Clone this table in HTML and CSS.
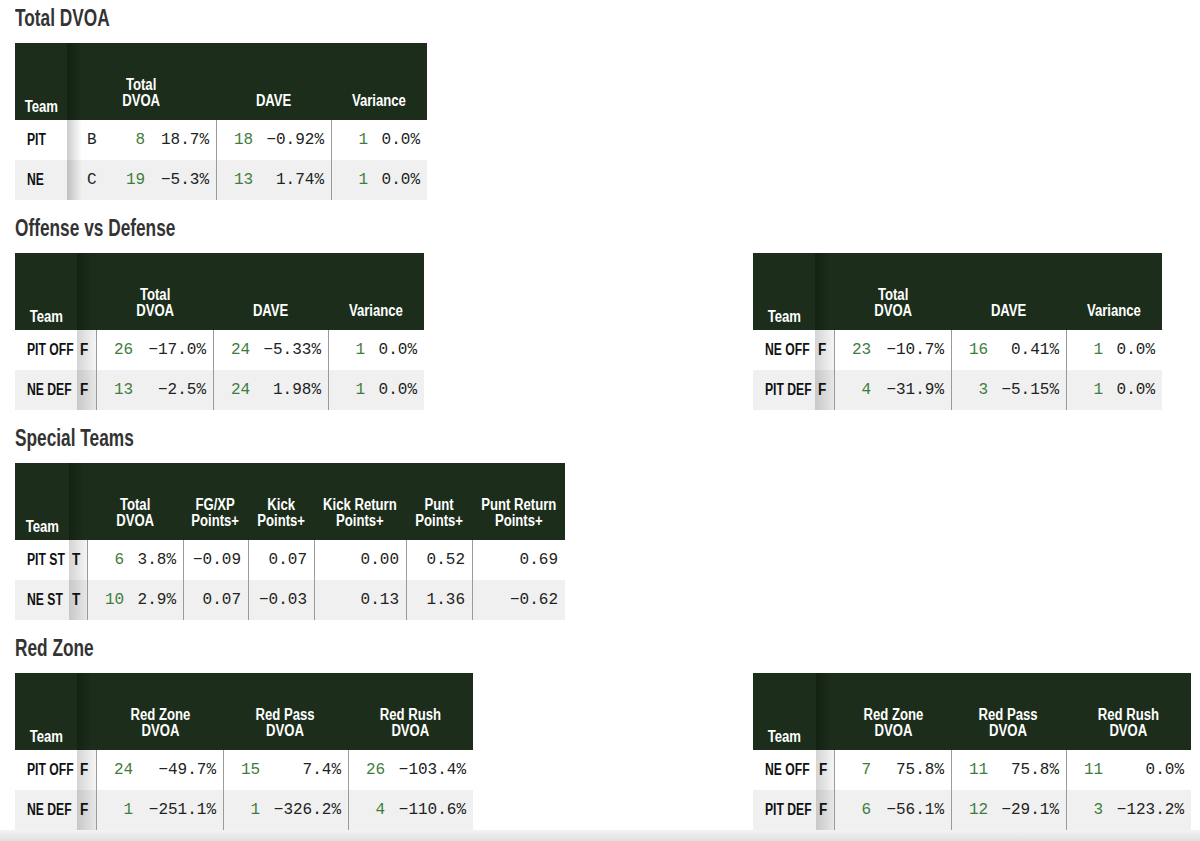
FILE: index.html
```html
<!DOCTYPE html>
<html lang="en">
<head>
<meta charset="utf-8">
<title>DVOA Matchup</title>
<link rel="stylesheet" href="styles.css">
</head>
<body>
<main class="page">
  <section class="section">
    <h2 class="sec-title"><span class="tx">Total DVOA</span></h2>
    <div class="tbl t-total">
      <div class="tr thead">
        <div class="th team"><span class="tx">Team</span></div>
        <div class="th span2 shade"><span class="tx">Total<br>DVOA</span></div>
        <div class="th"><span class="tx">DAVE</span></div>
        <div class="th"><span class="tx">Variance</span></div>
      </div>
      <div class="tr">
        <div class="td team"><span class="tx">PIT</span></div>
        <div class="td grade">B</div>
        <div class="td num"><span class="rk">8</span><span class="v">18.7%</span></div>
        <div class="td num sep"><span class="rk">18</span><span class="v">−0.92%</span></div>
        <div class="td num sep"><span class="rk">1</span><span class="v">0.0%</span></div>
      </div>
      <div class="tr alt">
        <div class="td team"><span class="tx">NE</span></div>
        <div class="td grade">C</div>
        <div class="td num"><span class="rk">19</span><span class="v">−5.3%</span></div>
        <div class="td num sep"><span class="rk">13</span><span class="v">1.74%</span></div>
        <div class="td num sep"><span class="rk">1</span><span class="v">0.0%</span></div>
      </div>
    </div>
  </section>

  <section class="section">
    <h2 class="sec-title"><span class="tx">Offense vs Defense</span></h2>
    <div class="pair">
      <div class="tbl t-ovd">
        <div class="tr thead">
          <div class="th team"><span class="tx">Team</span></div>
          <div class="th strip"></div>
          <div class="th"><span class="tx">Total<br>DVOA</span></div>
          <div class="th"><span class="tx">DAVE</span></div>
          <div class="th"><span class="tx">Variance</span></div>
        </div>
        <div class="tr">
          <div class="td team"><span class="tx">PIT OFF</span></div>
          <div class="td strip"><span class="tx">F</span></div>
          <div class="td num"><span class="rk">26</span><span class="v">−17.0%</span></div>
          <div class="td num sep"><span class="rk">24</span><span class="v">−5.33%</span></div>
          <div class="td num sep"><span class="rk">1</span><span class="v">0.0%</span></div>
        </div>
        <div class="tr alt">
          <div class="td team"><span class="tx">NE DEF</span></div>
          <div class="td strip"><span class="tx">F</span></div>
          <div class="td num"><span class="rk">13</span><span class="v">−2.5%</span></div>
          <div class="td num sep"><span class="rk">24</span><span class="v">1.98%</span></div>
          <div class="td num sep"><span class="rk">1</span><span class="v">0.0%</span></div>
        </div>
      </div>
      <div class="tbl t-ovd">
        <div class="tr thead">
          <div class="th team"><span class="tx">Team</span></div>
          <div class="th strip"></div>
          <div class="th"><span class="tx">Total<br>DVOA</span></div>
          <div class="th"><span class="tx">DAVE</span></div>
          <div class="th"><span class="tx">Variance</span></div>
        </div>
        <div class="tr">
          <div class="td team"><span class="tx">NE OFF</span></div>
          <div class="td strip"><span class="tx">F</span></div>
          <div class="td num"><span class="rk">23</span><span class="v">−10.7%</span></div>
          <div class="td num sep"><span class="rk">16</span><span class="v">0.41%</span></div>
          <div class="td num sep"><span class="rk">1</span><span class="v">0.0%</span></div>
        </div>
        <div class="tr alt">
          <div class="td team"><span class="tx">PIT DEF</span></div>
          <div class="td strip"><span class="tx">F</span></div>
          <div class="td num"><span class="rk">4</span><span class="v">−31.9%</span></div>
          <div class="td num sep"><span class="rk">3</span><span class="v">−5.15%</span></div>
          <div class="td num sep"><span class="rk">1</span><span class="v">0.0%</span></div>
        </div>
      </div>
    </div>
  </section>

  <section class="section">
    <h2 class="sec-title"><span class="tx">Special Teams</span></h2>
    <div class="tbl t-st">
      <div class="tr thead">
        <div class="th team"><span class="tx">Team</span></div>
        <div class="th strip"></div>
        <div class="th"><span class="tx">Total<br>DVOA</span></div>
        <div class="th"><span class="tx">FG/XP<br>Points+</span></div>
        <div class="th"><span class="tx">Kick<br>Points+</span></div>
        <div class="th"><span class="tx">Kick Return<br>Points+</span></div>
        <div class="th"><span class="tx">Punt<br>Points+</span></div>
        <div class="th"><span class="tx">Punt Return<br>Points+</span></div>
      </div>
      <div class="tr">
        <div class="td team"><span class="tx">PIT ST</span></div>
        <div class="td strip"><span class="tx">T</span></div>
        <div class="td num"><span class="rk">6</span><span class="v">3.8%</span></div>
        <div class="td num sep plain"><span class="v">−0.09</span></div>
        <div class="td num sep plain"><span class="v">0.07</span></div>
        <div class="td num sep plain"><span class="v">0.00</span></div>
        <div class="td num sep plain"><span class="v">0.52</span></div>
        <div class="td num sep plain"><span class="v">0.69</span></div>
      </div>
      <div class="tr alt">
        <div class="td team"><span class="tx">NE ST</span></div>
        <div class="td strip"><span class="tx">T</span></div>
        <div class="td num"><span class="rk">10</span><span class="v">2.9%</span></div>
        <div class="td num sep plain"><span class="v">0.07</span></div>
        <div class="td num sep plain"><span class="v">−0.03</span></div>
        <div class="td num sep plain"><span class="v">0.13</span></div>
        <div class="td num sep plain"><span class="v">1.36</span></div>
        <div class="td num sep plain"><span class="v">−0.62</span></div>
      </div>
    </div>
  </section>

  <section class="section">
    <h2 class="sec-title"><span class="tx">Red Zone</span></h2>
    <div class="pair">
      <div class="tbl t-rz">
        <div class="tr thead">
          <div class="th team"><span class="tx">Team</span></div>
          <div class="th strip"></div>
          <div class="th"><span class="tx">Red Zone<br>DVOA</span></div>
          <div class="th"><span class="tx">Red Pass<br>DVOA</span></div>
          <div class="th"><span class="tx">Red Rush<br>DVOA</span></div>
        </div>
        <div class="tr">
          <div class="td team"><span class="tx">PIT OFF</span></div>
          <div class="td strip"><span class="tx">F</span></div>
          <div class="td num"><span class="rk">24</span><span class="v">−49.7%</span></div>
          <div class="td num sep"><span class="rk">15</span><span class="v">7.4%</span></div>
          <div class="td num sep"><span class="rk">26</span><span class="v">−103.4%</span></div>
        </div>
        <div class="tr alt">
          <div class="td team"><span class="tx">NE DEF</span></div>
          <div class="td strip"><span class="tx">F</span></div>
          <div class="td num"><span class="rk">1</span><span class="v">−251.1%</span></div>
          <div class="td num sep"><span class="rk">1</span><span class="v">−326.2%</span></div>
          <div class="td num sep"><span class="rk">4</span><span class="v">−110.6%</span></div>
        </div>
      </div>
      <div class="tbl t-rz2">
        <div class="tr thead">
          <div class="th team"><span class="tx">Team</span></div>
          <div class="th strip"></div>
          <div class="th"><span class="tx">Red Zone<br>DVOA</span></div>
          <div class="th"><span class="tx">Red Pass<br>DVOA</span></div>
          <div class="th"><span class="tx">Red Rush<br>DVOA</span></div>
        </div>
        <div class="tr">
          <div class="td team"><span class="tx">NE OFF</span></div>
          <div class="td strip"><span class="tx">F</span></div>
          <div class="td num"><span class="rk">7</span><span class="v">75.8%</span></div>
          <div class="td num sep"><span class="rk">11</span><span class="v">75.8%</span></div>
          <div class="td num sep"><span class="rk">11</span><span class="v">0.0%</span></div>
        </div>
        <div class="tr alt">
          <div class="td team"><span class="tx">PIT DEF</span></div>
          <div class="td strip"><span class="tx">F</span></div>
          <div class="td num"><span class="rk">6</span><span class="v">−56.1%</span></div>
          <div class="td num sep"><span class="rk">12</span><span class="v">−29.1%</span></div>
          <div class="td num sep"><span class="rk">3</span><span class="v">−123.2%</span></div>
        </div>
      </div>
    </div>
  </section>
</main>
<div class="bottom-shade"></div>
</body>
</html>
```

FILE: styles.css
```css
* { box-sizing: border-box; }

html, body {
  margin: 0;
  padding: 0;
  background: #ffffff;
}

body {
  font-family: "Liberation Sans", Arial, sans-serif;
  color: #222;
}

.page {
  padding: 3px 15px 0;
}

/* condensed display face: horizontally compressed sans */
.tx {
  display: inline-block;
  white-space: nowrap;
}

.sec-title {
  margin: 13px 0 10px;
  font-size: 24px;
  line-height: 30px;
  font-weight: 700;
  color: #333333;
}

.sec-title .tx {
  transform: scaleX(0.72);
  transform-origin: 0 50%;
}

.section:first-child .sec-title {
  margin-top: 0;
}

.pair {
  display: grid;
  grid-template-columns: 738px auto;
  align-items: start;
}

.tbl {
  display: flex;
  flex-direction: column;
  width: max-content;
}

.tr {
  display: grid;
  height: 40px;
  background: #ffffff;
}

.tr.alt {
  background: #f0f0f0;
}

.tr.thead {
  height: 77px;
  background: #1c2e1b;
  color: #ffffff;
}

.t-total .tr { grid-template-columns: 52px 42px 107px 115px 96px; }
.t-ovd .tr { grid-template-columns: 62px 20px 116px 115px 96px; }
.t-st .tr { grid-template-columns: 54px 19px 95px 65px 66px 92px 66px 93px; }
.t-rz .tr { grid-template-columns: 62px 20px 126px 125px 125px; }
.t-rz2 .tr { grid-template-columns: 63px 19px 116px 115px 125px; }

.th {
  display: flex;
  align-items: flex-end;
  justify-content: center;
  text-align: center;
  padding-bottom: 11px;
  font-size: 16px;
  line-height: 16px;
  font-weight: 700;
  min-width: 0;
}

.th .tx {
  transform: scaleX(0.82);
  transform-origin: 50% 100%;
}

.th.team {
  padding-bottom: 5px;
}

.th.span2 {
  grid-column: span 2;
}

.th.shade,
.th.strip {
  background-image: linear-gradient(to right, rgba(0, 0, 0, 0.28), rgba(0, 0, 0, 0) 16px);
}

.td {
  display: flex;
  align-items: center;
  min-width: 0;
}

.td.team {
  padding-left: 12px;
  font-size: 16px;
  font-weight: 700;
  color: #111;
  overflow: hidden;
}

.td.team .tx {
  transform: scaleX(0.76);
  transform-origin: 0 50%;
}

.td.strip {
  padding-left: 3px;
  font-size: 16px;
  font-weight: 700;
  color: #111;
  border-right: 1px solid #9a9a9a;
  background-image: linear-gradient(to right, rgba(0, 0, 0, 0.17), rgba(0, 0, 0, 0.04));
  overflow: hidden;
}

.td.strip .tx {
  transform: scaleX(0.85);
  transform-origin: 0 50%;
}

.td.grade {
  padding-left: 20px;
  font-family: "Liberation Mono", monospace;
  font-size: 16px;
  color: #222;
  background-image: linear-gradient(to right, rgba(0, 0, 0, 0.2), rgba(0, 0, 0, 0) 15px);
}

.num {
  justify-content: space-between;
  padding: 0 7px 0 17px;
  font-family: "Liberation Mono", monospace;
  font-size: 16px;
  color: #222;
  white-space: nowrap;
}

.num.plain {
  justify-content: flex-end;
}

.num.sep {
  border-left: 1px solid #9a9a9a;
}

.rk {
  width: 2ch;
  text-align: right;
  color: #3f7d3c;
}

.bottom-shade {
  height: 11px;
  background: linear-gradient(#f3f3f3, #e1e1e1);
}
```
